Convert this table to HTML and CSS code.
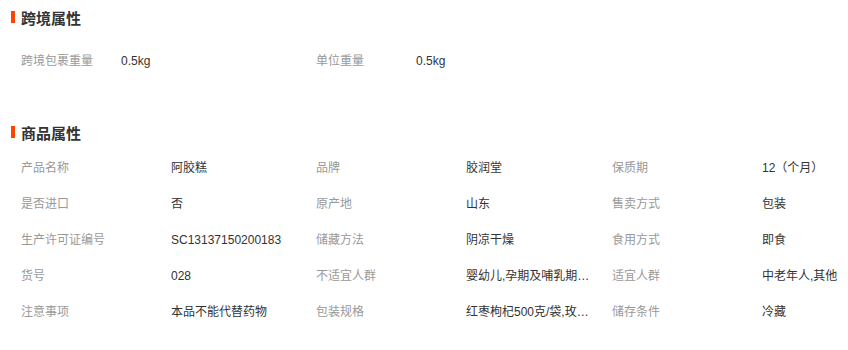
FILE: index.html
```html
<!DOCTYPE html>
<html lang="zh-CN">
<head>
<meta charset="utf-8">
<link rel="stylesheet" href="styles.css">
</head>
<body>
<div class="page">
  <section class="section section-cross">
    <h2 class="title">跨境属性</h2>
    <div class="grid grid-cross">
      <div class="item"><span class="label">跨境包裹重量</span><span class="value">0.5kg</span></div>
      <div class="item"><span class="label">单位重量</span><span class="value">0.5kg</span></div>
    </div>
  </section>
  <section class="section section-goods">
    <h2 class="title">商品属性</h2>
    <div class="grid grid-goods">
      <div class="item"><span class="label">产品名称</span><span class="value">阿胶糕</span></div>
      <div class="item"><span class="label">品牌</span><span class="value">胶润堂</span></div>
      <div class="item"><span class="label">保质期</span><span class="value">12（个月）</span></div>
      <div class="item"><span class="label">是否进口</span><span class="value">否</span></div>
      <div class="item"><span class="label">原产地</span><span class="value">山东</span></div>
      <div class="item"><span class="label">售卖方式</span><span class="value">包装</span></div>
      <div class="item"><span class="label">生产许可证编号</span><span class="value">SC13137150200183</span></div>
      <div class="item"><span class="label">储藏方法</span><span class="value">阴凉干燥</span></div>
      <div class="item"><span class="label">食用方式</span><span class="value">即食</span></div>
      <div class="item"><span class="label">货号</span><span class="value">028</span></div>
      <div class="item"><span class="label">不适宜人群</span><span class="value">婴幼儿,孕期及哺乳期妇女</span></div>
      <div class="item"><span class="label">适宜人群</span><span class="value value-wide">中老年人,其他</span></div>
      <div class="item"><span class="label">注意事项</span><span class="value">本品不能代替药物</span></div>
      <div class="item"><span class="label">包装规格</span><span class="value">红枣枸杞500克/袋,玫瑰500克/袋</span></div>
      <div class="item"><span class="label">储存条件</span><span class="value">冷藏</span></div>
    </div>
  </section>
</div>
</body>
</html>
```

FILE: styles.css
```css
html, body {
  margin: 0;
  padding: 0;
  background: #fff;
}

body {
  font-family: "Liberation Sans", "Noto Sans CJK SC", sans-serif;
  font-size: 12px;
  color: #333;
}

.page {
  padding-left: 11px;
  width: 837px;
}

.section-cross {
  margin-bottom: 36px;
}

.title {
  margin: 0;
  height: 34px;
  display: flex;
  align-items: center;
  font-size: 15px;
  font-weight: bold;
  color: #333;
}

.title::before {
  content: "";
  display: block;
  width: 4px;
  height: 12px;
  background: #ff4400;
  margin-right: 6px;
}

.grid-cross {
  margin-top: 9px;
}

.grid-goods {
  margin-top: 1px;
}

.grid {
  display: grid;
  grid-template-columns: 295px 296px 246px;
  padding-left: 10px;
}

.item {
  display: flex;
  align-items: center;
  height: 36px;
  line-height: 36px;
}

.label {
  color: #999;
  flex: 0 0 150px;
}

.grid-cross .label {
  flex-basis: 100px;
}

.value {
  color: #333;
  max-width: 128px;
  white-space: nowrap;
  overflow: hidden;
  text-overflow: ellipsis;
}

.value-wide {
  max-width: 90px;
}
```
